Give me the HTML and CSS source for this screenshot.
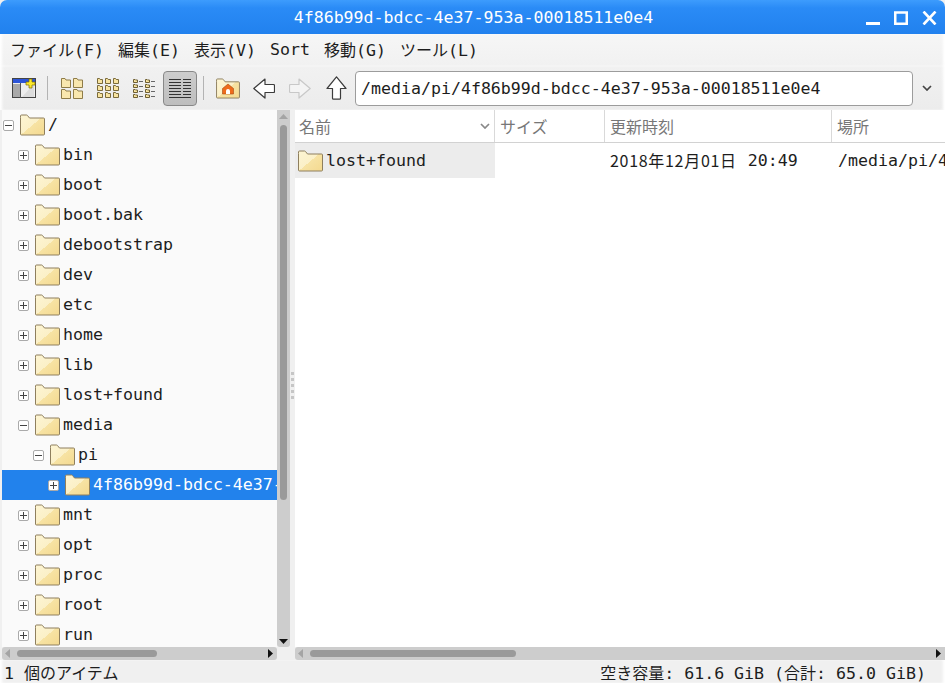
FILE: index.html
```html
<!DOCTYPE html>
<html lang="ja">
<head>
<meta charset="utf-8">
<title>4f86b99d-bdcc-4e37-953a-00018511e0e4</title>
<link rel="stylesheet" href="styles.css">
</head>
<body>
<svg class="defs" width="0" height="0" aria-hidden="true">
  <defs>
    <linearGradient id="fg" x1="0" y1="0" x2="1" y2="1">
      <stop offset="0" stop-color="#fdf5d3"/><stop offset=".5" stop-color="#fbf0c8"/>
      <stop offset=".5" stop-color="#f7e3a4"/><stop offset="1" stop-color="#f4d98f"/>
    </linearGradient>
    <symbol id="folder" viewBox="0 0 25 22">
      <path d="M.5 3.500V20a1 1 0 0 0 1 1h22a1 1 0 0 0 1-1V5a1 1 0 0 0-1-1H9.500L7.500 1.500a1 1 0 0 0-.8-.5H1.500a1 1 0 0 0-1 1z" fill="url(#fg)" stroke="#8e7f5e"/>
    </symbol>
    <symbol id="mid" viewBox="0 0 10 10">
      <path d="M.5.5h3.500l1 1.500h4.500v7.500H.5z" fill="#f9e7ae" stroke="#8f7c48"/>
    </symbol>
    <symbol id="mini" viewBox="0 0 6 6">
      <path d="M.5.5h2l.7 1h2.300v4H.5z" fill="#f8e4a0" stroke="#7a6a3a"/>
    </symbol>
    <symbol id="tiny" viewBox="0 0 5 4">
      <path d="M.5.500h1.500l.5.500h2v2.500H.5z" fill="#f8e4a0" stroke="#6e5f33"/>
    </symbol>
  </defs>
</svg>
<div class="window">
  <header class="titlebar">
    <span class="title">4f86b99d-bdcc-4e37-953a-00018511e0e4</span>
    <div class="wm">
      <svg width="14" height="14" viewBox="0 0 14 14"><path d="M0 11h14v3H0z" fill="#fff"/></svg>
      <svg width="14" height="14" viewBox="0 0 14 14"><path d="M1.250 1.500h11.500v11.250H1.250z" fill="none" stroke="#fff" stroke-width="2.500"/></svg>
      <svg width="15" height="14" viewBox="0 0 15 14"><path d="M1.500.5l12 13M13.500.5l-12 13" stroke="#fff" stroke-width="2.600" fill="none"/></svg>
    </div>
  </header>
  <nav class="menubar">
    <span><span class="cjk">ファイル</span>(F)</span><span><span class="cjk">編集</span>(E)</span><span><span class="cjk">表示</span>(V)</span><span>Sort</span><span><span class="cjk">移動</span>(G)</span><span><span class="cjk">ツール</span>(L)</span>
  </nav>
  <div class="toolbar">
    <button class="tb">
      <svg width="24" height="20" viewBox="0 0 24 20">
        <rect x=".5" y=".5" width="23" height="19" fill="#eee" stroke="#444"/>
        <path d="M1 6h8v13H1z" fill="#a9a9a9"/><path d="M8.500 5v15" stroke="#555"/>
        <path d="M1 1h22v4H1z" fill="#2d55d8"/>
        <path d="M10 19l12-13v13z" fill="#dcdcdc"/>
        <path d="M17 1h3v3h3v3h-3v3h-3V7h-3V4h3z" fill="#fce92b" stroke="#7c6b00" stroke-width=".7"/>
      </svg>
    </button>
    <i class="sep"></i>
    <button class="tb">
      <svg width="22" height="21" viewBox="0 0 22 21"><use href="#mid" width="10" height="10"/><use href="#mid" x="12" width="10" height="10"/><use href="#mid" y="11" width="10" height="10"/><use href="#mid" x="12" y="11" width="10" height="10"/></svg>
    </button>
    <button class="tb">
      <svg width="22" height="20" viewBox="0 0 22 20"><use href="#mini" width="6" height="6"/><use href="#mini" x="8" width="6" height="6"/><use href="#mini" x="16" width="6" height="6"/><use href="#mini" y="7" width="6" height="6"/><use href="#mini" x="8" y="7" width="6" height="6"/><use href="#mini" x="16" y="7" width="6" height="6"/><use href="#mini" y="14" width="6" height="6"/><use href="#mini" x="8" y="14" width="6" height="6"/><use href="#mini" x="16" y="14" width="6" height="6"/></svg>
    </button>
    <button class="tb">
      <svg width="22" height="20" viewBox="0 0 22 20"><use href="#tiny" y="1" width="5" height="4"/><use href="#tiny" x="12" y="1" width="5" height="4"/><use href="#tiny" y="6" width="5" height="4"/><use href="#tiny" x="12" y="6" width="5" height="4"/><use href="#tiny" y="11" width="5" height="4"/><use href="#tiny" x="12" y="11" width="5" height="4"/><use href="#tiny" y="16" width="5" height="4"/><use href="#tiny" x="12" y="16" width="5" height="4"/><path d="M6 3.500h4M18 3.500h4M6 8.500h4M18 8.500h4M6 13.500h4M18 13.500h4M6 18.500h4M18 18.500h4" stroke="#666"/></svg>
    </button>
    <button class="tb tb-active">
      <svg width="22" height="20" viewBox="0 0 22 20"><path d="M0 1.500h12M14 1.500h8M0 4.500h12M14 4.500h8M0 7.500h12M14 7.500h8M0 10.500h12M14 10.500h8M0 13.500h12M14 13.500h8M0 16.500h12M14 16.500h8M0 19.500h22" stroke="#333" fill="none"/></svg>
    </button>
    <i class="sep"></i>
    <button class="tb">
      <svg width="24" height="21" viewBox="0 0 24 21">
        <use href="#folder" width="24" height="21"/>
        <path d="M12 6l5.500 4.500V16h-11v-5.500z" fill="#ee6b1c" stroke="#a64a10" stroke-width=".6"/>
        <path d="M10 16v-3a2 2 0 0 1 4 0v3z" fill="#fff"/>
      </svg>
    </button>
    <button class="tb">
      <svg width="22" height="21" viewBox="0 0 22 21"><path d="M12 1L.8 10.500 12 20v-5.500h8.500a1 1 0 0 0 1-1v-6a1 1 0 0 0-1-1H12z" fill="#fff" stroke="#3c3c3c" stroke-width="1.200" stroke-linejoin="round"/></svg>
    </button>
    <button class="tb">
      <svg width="22" height="21" viewBox="0 0 22 21"><path d="M10 1l11.200 9.500L10 20v-5.500H1.500a1 1 0 0 1-1-1v-6a1 1 0 0 1 1-1H10z" fill="#f4f4f4" stroke="#c8c8c8" stroke-width="1.200" stroke-linejoin="round"/></svg>
    </button>
    <button class="tb">
      <svg width="21" height="24" viewBox="0 0 21 24"><path d="M10.500 .8L20 12.500h-5.500v9.700a1 1 0 0 1-1 1h-6a1 1 0 0 1-1-1v-9.700H1z" fill="#fff" stroke="#3c3c3c" stroke-width="1.200" stroke-linejoin="round"/></svg>
    </button>
    <div class="path">/media/pi/4f86b99d-bdcc-4e37-953a-00018511e0e4</div>
    <svg class="combo" width="10" height="6" viewBox="0 0 10 6"><path d="M1 1l4 4 4-4" fill="none" stroke="#444" stroke-width="1.700"/></svg>
  </div>
  <main class="panes">
    <section class="left">
      <div class="tree-wrap">
        <div class="tree">
          <div class="row l0"><b class="exp minus"></b><svg class="fld"><use href="#folder"/></svg><span class="name">/</span></div>
          <div class="row l1"><b class="exp plus"></b><svg class="fld"><use href="#folder"/></svg><span class="name">bin</span></div>
          <div class="row l1"><b class="exp plus"></b><svg class="fld"><use href="#folder"/></svg><span class="name">boot</span></div>
          <div class="row l1"><b class="exp plus"></b><svg class="fld"><use href="#folder"/></svg><span class="name">boot.bak</span></div>
          <div class="row l1"><b class="exp plus"></b><svg class="fld"><use href="#folder"/></svg><span class="name">debootstrap</span></div>
          <div class="row l1"><b class="exp plus"></b><svg class="fld"><use href="#folder"/></svg><span class="name">dev</span></div>
          <div class="row l1"><b class="exp plus"></b><svg class="fld"><use href="#folder"/></svg><span class="name">etc</span></div>
          <div class="row l1"><b class="exp plus"></b><svg class="fld"><use href="#folder"/></svg><span class="name">home</span></div>
          <div class="row l1"><b class="exp plus"></b><svg class="fld"><use href="#folder"/></svg><span class="name">lib</span></div>
          <div class="row l1"><b class="exp plus"></b><svg class="fld"><use href="#folder"/></svg><span class="name">lost+found</span></div>
          <div class="row l1"><b class="exp minus"></b><svg class="fld"><use href="#folder"/></svg><span class="name">media</span></div>
          <div class="row l2"><b class="exp minus"></b><svg class="fld"><use href="#folder"/></svg><span class="name">pi</span></div>
          <div class="row l3 selected"><b class="exp plus"></b><svg class="fld"><use href="#folder"/></svg><span class="name">4f86b99d-bdcc-4e37-953a-00018511e0e4</span></div>
          <div class="row l1"><b class="exp plus"></b><svg class="fld"><use href="#folder"/></svg><span class="name">mnt</span></div>
          <div class="row l1"><b class="exp plus"></b><svg class="fld"><use href="#folder"/></svg><span class="name">opt</span></div>
          <div class="row l1"><b class="exp plus"></b><svg class="fld"><use href="#folder"/></svg><span class="name">proc</span></div>
          <div class="row l1"><b class="exp plus"></b><svg class="fld"><use href="#folder"/></svg><span class="name">root</span></div>
          <div class="row l1"><b class="exp plus"></b><svg class="fld"><use href="#folder"/></svg><span class="name">run</span></div>
        </div>
        <div class="vscroll">
          <svg class="arrow" width="9" height="5" viewBox="0 0 9 5"><path d="M4.500 0L9 5H0z" fill="#a4a4a4"/></svg>
          <div class="vtrack"><div class="vthumb"></div></div>
          <svg class="arrow" width="9" height="5" viewBox="0 0 9 5"><path d="M0 0h9L4.500 5z" fill="#111"/></svg>
        </div>
      </div>
      <div class="hscroll hscroll-left">
        <svg width="5" height="9" viewBox="0 0 5 9"><path d="M5 0v9L0 4.500z" fill="#a4a4a4"/></svg>
        <div class="htrack"><div class="hthumb thumb-left"></div></div>
        <svg width="5" height="9" viewBox="0 0 5 9"><path d="M0 0v9l5-4.500z" fill="#111"/></svg>
      </div>
    </section>
    <div class="split"><i></i><i></i><i></i><i></i><i></i></div>
    <section class="right">
      <div class="list">
        <div class="thead">
          <div class="th c-name"><span class="cjk">名前</span><svg width="10" height="6" viewBox="0 0 10 6"><path d="M1 1l4 4 4-4" fill="none" stroke="#888" stroke-width="1.700"/></svg></div>
          <div class="th c-size"><span class="cjk">サイズ</span></div>
          <div class="th c-date"><span class="cjk">更新時刻</span></div>
          <div class="th c-loc"><span class="cjk">場所</span></div>
        </div>
        <div class="tr">
          <div class="td c-name"><svg class="fld"><use href="#folder"/></svg><span class="name">lost+found</span></div>
          <div class="td c-size"></div>
          <div class="td c-date"><span class="date">2018年12月01日</span><span class="name time">20:49</span></div>
          <div class="td c-loc"><span class="name">/media/pi/4f86b99d-bdcc-4e37-953a-00018511e0e4</span></div>
        </div>
      </div>
      <div class="hscroll">
        <svg width="5" height="9" viewBox="0 0 5 9"><path d="M5 0v9L0 4.500z" fill="#a4a4a4"/></svg>
        <div class="htrack"><div class="hthumb thumb-right"></div></div>
        <svg width="5" height="9" viewBox="0 0 5 9"><path d="M0 0v9l5-4.500z" fill="#111"/></svg>
      </div>
    </section>
  </main>
  <footer class="status">
    <span>1 <span class="cjk">個のアイテム</span></span>
    <span><span class="cjk">空き容量</span>: 61.6 GiB (<span class="cjk">合計</span>: 65.0 GiB)</span>
  </footer>
</div>
</body>
</html>
```

FILE: styles.css
```css
* { box-sizing: border-box; }
html, body { margin: 0; height: 100%; background: #fff; overflow: hidden; }
body { font-family: "DejaVu Sans Mono", "Noto Sans CJK JP", monospace; font-size: 16.6px; color: #1d1d1d; }
.defs { position: absolute; }
.cjk { font-family: "Noto Sans CJK JP", sans-serif; font-size: 16px; }
.window { width: 945px; height: 683px; display: flex; flex-direction: column; background: #f0f0f0; }

.titlebar { height: 34px; flex: none; display: flex; align-items: center; justify-content: center; position: relative; color: #fff; padding-left: 2px; border-radius: 7px 7px 0 0; background: linear-gradient(#3d9cfd 0, #2a8bf6 8px, #2181ee 100%); }
.wm { position: absolute; top: 11px; right: 8px; display: flex; gap: 14px; }

.menubar { height: 32px; flex: none; display: flex; align-items: center; gap: 14px; padding: 0 0 2px 10px; background: linear-gradient(#f6f6f6, #f1f1f1); box-shadow: inset 3px 0 3px -1px #fff, inset -3px 0 3px -1px #fff; }
.toolbar { height: 44px; flex: none; display: flex; align-items: center; padding: 0 0 0 6px; background: linear-gradient(#f1f1f1, #ececec); box-shadow: inset 3px 0 3px -1px #fff, inset -3px 0 3px -1px #fff; }
.tb { width: 36px; height: 36px; padding: 0; border: 0; background: none; display: flex; align-items: center; justify-content: center; flex: none; }
.tb-active { height: 35px; width: 34px; border: 1px solid #888; border-radius: 4px; background: linear-gradient(#cdcdcd, #bdbdbd); margin: 0 1px; }
.sep { width: 1px; height: 24px; background: #b3b3b3; margin: 0 6px 0 5px; flex: none; }
.path { width: 558px; height: 35px; flex: none; margin-left: 1px; padding-left: 5px; line-height: 34px; background: #fff; border: 1px solid #9c9c9c; border-radius: 4px; }
.combo { margin-left: 9px; }

.panes { flex: 1; min-height: 0; display: flex; }
.left { width: 290px; flex: none; display: flex; flex-direction: column; padding-left: 2px; }
.tree-wrap { flex: 1; min-height: 0; display: flex; }
.tree { width: 275px; flex: none; overflow: hidden; background: #fafafa; }
.row { height: 30px; display: flex; align-items: center; white-space: nowrap; overflow: hidden; }
.row .name { margin-bottom: 2px; flex: none; }
.l0 { padding-left: 1px; }
.l1 { padding-left: 16px; }
.l2 { padding-left: 31px; }
.l3 { padding-left: 46px; }
.selected { background: #2282ec; color: #fff; }
.exp { width: 11px; height: 11px; flex: none; margin-right: 6px; border: 1px solid #aaa; border-radius: 2px; background: #fff linear-gradient(#444, #444) center / 7px 1px no-repeat; }
.plus { background-image: linear-gradient(#444, #444), linear-gradient(#444, #444); background-size: 7px 1px, 1px 7px; }
.fld { width: 25px; height: 22px; flex: none; margin-right: 3px; }
.vscroll { width: 13px; flex: none; display: flex; flex-direction: column; align-items: center; background: #cdcdcd; padding: 4px 0 3px; border-radius: 0 0 3px 3px; }
.vtrack { flex: 1; width: 100%; min-height: 0; padding: 6px 3px 0 3px; }
.vthumb { width: 7px; height: 375px; border-radius: 4px; background: #9a9a9a; }
.hscroll { height: 13px; flex: none; display: flex; align-items: center; background: #cdcdcd; padding: 0 4px 0 3px; border-radius: 3px 0 0 3px; }
.hscroll-left { margin-right: 13px; border-radius: 3px; }
.htrack { flex: 1; height: 7px; padding: 0 2px; }
.hthumb { height: 7px; border-radius: 4px; background: #9a9a9a; }
.thumb-left { width: 140px; margin-left: 5px; }
.thumb-right { width: 206px; margin-left: 5px; }

.split { width: 5px; flex: none; background: #f0f0f0; display: flex; flex-direction: column; align-items: center; justify-content: center; gap: 3px; }
.split i { width: 3px; height: 3px; background: #c6c6c6; }

.right { flex: 1; min-width: 0; display: flex; flex-direction: column; }
.list { flex: 1; min-height: 0; background: #fff; overflow: hidden; }
.thead { height: 33px; display: flex; border-bottom: 1px solid #d2d2d2; }
.th { height: 100%; display: flex; align-items: center; justify-content: space-between; padding-left: 5px; color: #777; border-right: 1px solid #d9d9d9; flex: none; }
.th.c-name { padding-left: 4px; }
.th svg { margin-right: 4px; }
.c-name { width: 200px; }
.c-size { width: 110px; }
.c-date { width: 227px; }
.c-loc { width: 113px; }
.th.c-loc { border-right: 0; }
.tr { height: 35px; display: flex; }
.td { height: 100%; display: flex; align-items: center; flex: none; white-space: nowrap; overflow: hidden; }
.td.c-name { background: #ececec; padding-left: 3px; }
.td .fld { margin-right: 3px; }
.td.c-date { padding-left: 5px; }
.td.c-loc { padding-left: 6px; }
.date { font-family: "Noto Sans CJK JP", sans-serif; font-size: 16px; letter-spacing: .7px; margin-bottom: 2px; }
.time { margin-left: 11px; }

.status { height: 23px; flex: none; display: flex; align-items: center; justify-content: space-between; padding: 1px 19px 0 4px; background: #f0f0f0; box-shadow: inset 3px 0 3px -1px #fff, inset -3px 0 3px -1px #fff; }
```
